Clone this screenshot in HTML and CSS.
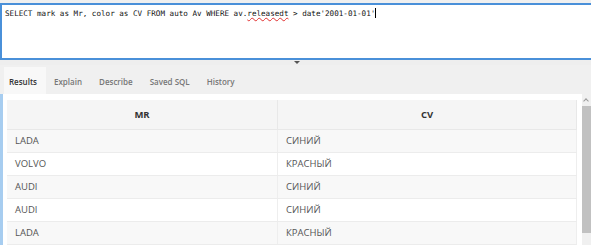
FILE: index.html
```html
<!DOCTYPE html>
<html lang="ru">
<head>
    <meta charset="UTF-8">
    <title>SQL</title>
    <link rel="stylesheet" href="styles.css">
</head>
<body>
<div class="editor">
    <div class="sql-line">SELECT mark as Mr, color as CV FROM auto Av WHERE av.<span class="typo">releasedt</span> &gt; date'2001-01-01'<span class="caret"></span></div>
</div>
<div class="splitter"><span class="grip"></span></div>
<div class="tabs">
    <div class="tab active">Results</div>
    <div class="tab">Explain</div>
    <div class="tab">Describe</div>
    <div class="tab">Saved SQL</div>
    <div class="tab">History</div>
</div>
<div class="results">
    <div class="table-wrap">
        <table class="grid">
            <thead>
                <tr><th class="col-mr">MR</th><th>CV</th></tr>
            </thead>
            <tbody>
                <tr><td>LADA</td><td>СИНИЙ</td></tr>
                <tr><td>VOLVO</td><td>КРАСНЫЙ</td></tr>
                <tr><td>AUDI</td><td>СИНИЙ</td></tr>
                <tr><td>AUDI</td><td>СИНИЙ</td></tr>
                <tr><td>LADA</td><td>КРАСНЫЙ</td></tr>
            </tbody>
        </table>
    </div>
    <div class="scrollbar">
        <div class="arrow"></div>
        <div class="thumb"></div>
    </div>
</div>
</body>
</html>
```

FILE: styles.css
```css
body {
    margin: 0;
    width: 591px;
    height: 245px;
    overflow: hidden;
    background-color: #f0f0f0;
    font-family: "Open Sans", Arial, sans-serif;
}
.editor {
    margin-top: 3px;
    height: 57px;
    box-sizing: border-box;
    background-color: #fff;
    border: 2px solid #4a90d9;
    border-right: none;
    padding: 3px 3px;
}
.sql-line {
    font-family: "DejaVu Sans Mono", monospace;
    font-size: 7.6px;
    line-height: 12px;
    color: #111;
    white-space: pre;
}
.typo {
    text-decoration: underline wavy #e03030;
    text-decoration-thickness: 1px;
}
.caret {
    display: inline-block;
    width: 1px;
    height: 10px;
    background-color: #000;
    vertical-align: -2px;
}
.splitter {
    height: 5px;
    display: flex;
    justify-content: center;
    background-color: #eee;
}
.grip {
    margin-left: 2px;
    width: 0;
    height: 0;
    border-left: 3px solid transparent;
    border-right: 3px solid transparent;
    border-top: 3px solid #555;
    margin-top: 1px;
}
.tabs {
    display: flex;
    align-items: flex-end;
    height: 29px;
    padding-left: 4px;
    background-color: #f0f0f0;
}
.tab {
    font-size: 8px;
    font-weight: 600;
    color: #777;
    padding: 2px 9px 0 5px;
    height: 25px;
    line-height: 25px;
    margin-right: 3px;
}
.tab.active {
    background-color: #f8f8f8;
    color: #333;
}
.results {
    display: flex;
    height: 151px;
    background-color: #fff;
    border-left: 3px solid #a7cdf0;
}
.table-wrap {
    flex: 1;
    padding: 6px 3px 0 4px;
}
.grid {
    width: 570px;
    table-layout: fixed;
    border-collapse: collapse;
    font-size: 9.5px;
    color: #555;
}
.grid th {
    height: 29px;
    padding: 0;
    background-color: #f5f5f5;
    color: #333;
    font-weight: 700;
    font-size: 9.5px;
    border-right: 1px solid #e8e8e8;
    border-bottom: 1px solid #e8e8e8;
}
.grid .col-mr {
    width: 270px;
}
.grid td {
    height: 22px;
    padding: 0 8px;
    line-height: 14px;
    color: #555;
    border-right: 1px solid #eee;
    border-bottom: 1px solid #ececec;
}
.grid tbody tr:nth-child(odd) {
    background-color: #f8f8f8;
}
.scrollbar {
    width: 9px;
    background-color: #f0f0f0;
    display: flex;
    flex-direction: column;
}
.arrow {
    height: 12px;
    position: relative;
}
.arrow::after {
    content: "";
    position: absolute;
    left: 2px;
    top: 5px;
    width: 3px;
    height: 3px;
    border-left: 1px solid #999;
    border-top: 1px solid #999;
    transform: rotate(45deg);
}
.thumb {
    height: 127px;
    background-color: #c1c1c1;
}
```
